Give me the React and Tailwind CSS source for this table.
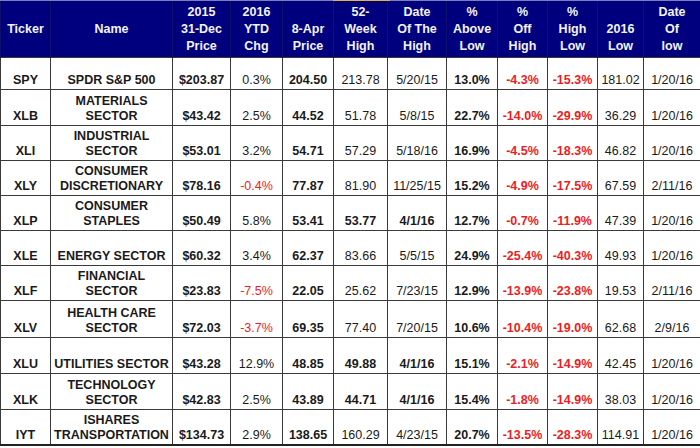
import React from 'react';

const cols = [50, 122, 58, 52, 51, 54, 59, 51, 50, 50, 46, 57];

const headers = [
  ['Ticker', '\u00a0'],
  ['Name', '\u00a0'],
  ['2015', '31-Dec', 'Price'],
  ['2016', 'YTD', 'Chg'],
  ['8-Apr', 'Price'],
  ['52-', 'Week', 'High'],
  ['Date', 'Of The', 'High'],
  ['%', 'Above', 'Low'],
  ['%', 'Off', 'High'],
  ['%', 'High', 'Low'],
  ['2016', 'Low'],
  ['Date', 'Of', 'low'],
];

const rows = [
  ['SPY', ['SPDR S&P 500'], '$203.87', '0.3%', '204.50', '213.78', '5/20/15', '13.0%', '-4.3%', '-15.3%', '181.02', '1/20/16', 32],
  ['XLB', ['MATERIALS', 'SECTOR'], '$43.42', '2.5%', '44.52', '51.78', '5/8/15', '22.7%', '-14.0%', '-29.9%', '36.29', '1/20/16', 36],
  ['XLI', ['INDUSTRIAL', 'SECTOR'], '$53.01', '3.2%', '54.71', '57.29', '5/18/16', '16.9%', '-4.5%', '-18.3%', '46.82', '1/20/16', 35],
  ['XLY', ['CONSUMER', 'DISCRETIONARY'], '$78.16', '-0.4%', '77.87', '81.90', '11/25/15', '15.2%', '-4.9%', '-17.5%', '67.59', '2/11/16', 35],
  ['XLP', ['CONSUMER', 'STAPLES'], '$50.49', '5.8%', '53.41', '53.77', '4/1/16', '12.7%', '-0.7%', '-11.9%', '47.39', '1/20/16', 35],
  ['XLE', ['ENERGY SECTOR'], '$60.32', '3.4%', '62.37', '83.66', '5/5/15', '24.9%', '-25.4%', '-40.3%', '49.93', '1/20/16', 35],
  ['XLF', ['FINANCIAL', 'SECTOR'], '$23.83', '-7.5%', '22.05', '25.62', '7/23/15', '12.9%', '-13.9%', '-23.8%', '19.53', '2/11/16', 35],
  ['XLV', ['HEALTH CARE', 'SECTOR'], '$72.03', '-3.7%', '69.35', '77.40', '7/20/15', '10.6%', '-10.4%', '-19.0%', '62.68', '2/9/16', 37],
  ['XLU', ['UTILITIES SECTOR'], '$43.28', '12.9%', '48.85', '49.88', '4/1/16', '15.1%', '-2.1%', '-14.9%', '42.45', '1/20/16', 36],
  ['XLK', ['TECHNOLOGY', 'SECTOR'], '$42.83', '2.5%', '43.89', '44.71', '4/1/16', '15.4%', '-1.8%', '-14.9%', '38.03', '1/20/16', 36],
  ['IYT', ['ISHARES', 'TRANSPORTATION'], '$134.73', '2.9%', '138.65', '160.29', '4/23/15', '20.7%', '-13.5%', '-28.3%', '114.91', '1/20/16', 36],
];

const Cell = ({ children, bold, red }) => (
  <td
    className={
      'border border-[#3a3a3a] px-0 pb-[1px] text-center align-bottom leading-[15px] whitespace-nowrap ' +
      (bold ? 'font-bold ' : 'font-normal ') +
      (red ? 'text-[#ee1c24]' : 'text-[#1a1a1a]')
    }
  >
    {children}
  </td>
);

const App = () => {
  return (
    <div
      className="w-[700px] h-[448px] bg-white overflow-hidden text-[12.5px]"
      style={{ fontFamily: '"Liberation Sans", Arial, sans-serif' }}
    >
      <div className="flex h-[1px]">
        <div className="w-[333px] bg-[#7d7db8]" />
        <div className="w-[57px] bg-[#e3b341]" />
        <div className="flex-1 bg-[#7d7db8]" />
      </div>
      <table className="w-[700px] table-fixed border-collapse border-b-2 border-b-[#222]">
        <colgroup>
          {cols.map((w, i) => (
            <col key={i} style={{ width: w }} />
          ))}
        </colgroup>
        <thead>
          <tr className="h-[56px] bg-[#00007e]">
            {headers.map((lines, i) => (
              <th
                key={i}
                className="border-x border-[#10106a] px-0 pb-[2px] text-center align-bottom font-bold leading-[17px] text-[#f2f2f2]"
              >
                {lines.map((l, j) => (
                  <div key={j}>{l}</div>
                ))}
              </th>
            ))}
          </tr>
        </thead>
        <tbody>
          {rows.map((r) => {
            const hi = r[6] === '4/1/16';
            return (
              <tr key={r[0]} style={{ height: r[12] }}>
                <Cell bold>{r[0]}</Cell>
                <Cell bold>
                  {r[1].map((l, j) => (
                    <div key={j}>{l}</div>
                  ))}
                </Cell>
                <Cell bold>{r[2]}</Cell>
                <Cell red={r[3].startsWith('-')}>{r[3]}</Cell>
                <Cell bold>{r[4]}</Cell>
                <Cell bold={hi}>{r[5]}</Cell>
                <Cell bold={hi}>{r[6]}</Cell>
                <Cell bold>{r[7]}</Cell>
                <Cell bold red>{r[8]}</Cell>
                <Cell bold red>{r[9]}</Cell>
                <Cell>{r[10]}</Cell>
                <Cell>{r[11]}</Cell>
              </tr>
            );
          })}
        </tbody>
      </table>
    </div>
  );
};

export default App;
